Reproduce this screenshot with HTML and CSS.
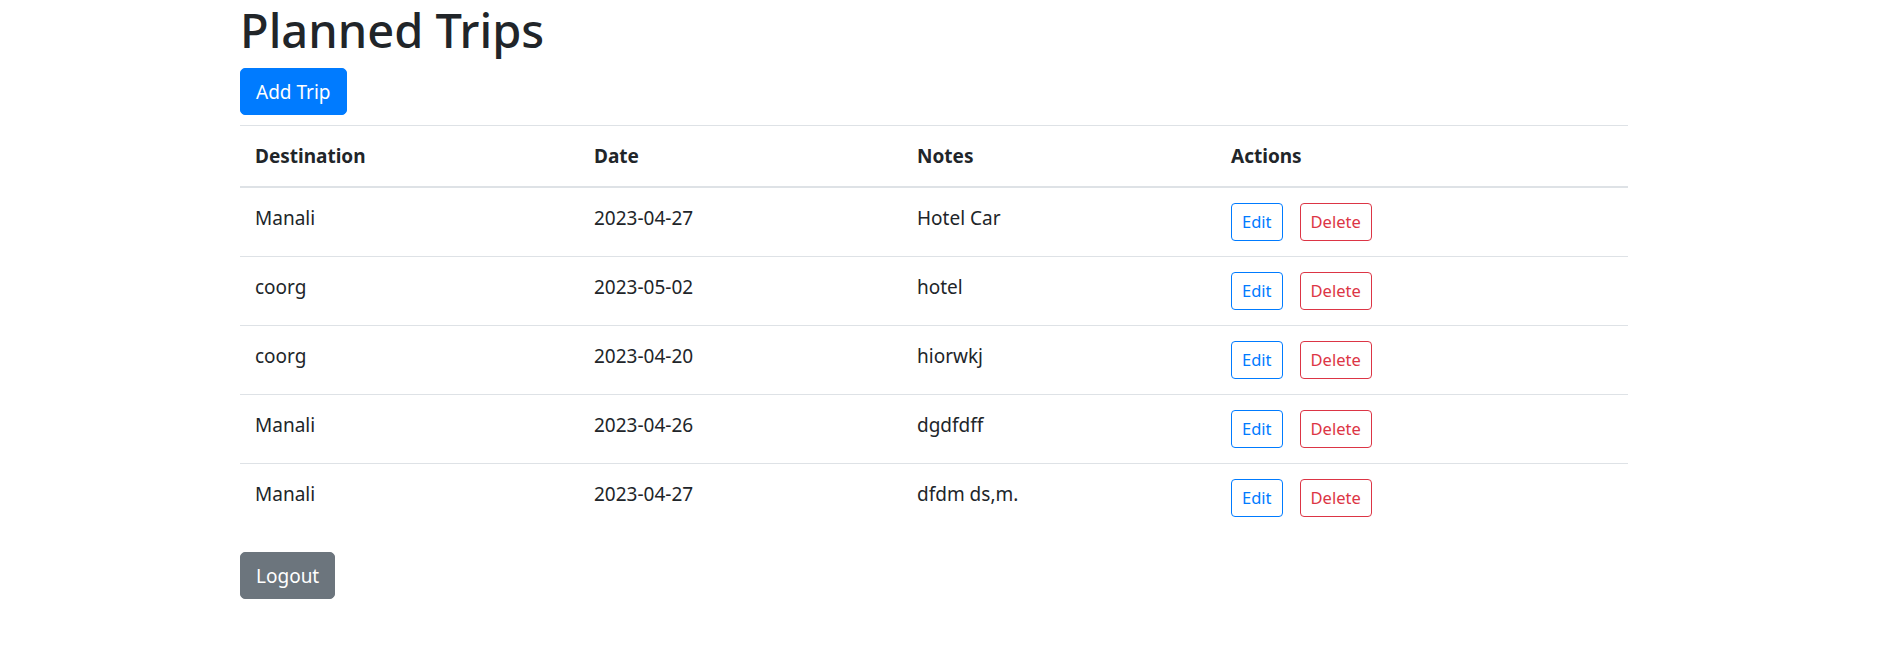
FILE: index.html
```html
<!DOCTYPE html>
<html lang="en">
<head>
<meta charset="utf-8">
<title>Planned Trips</title>
<link rel="stylesheet" href="styles.css">
</head>
<body>
<div class="container">
  <h1 class="title">Planned Trips</h1>
  <div class="toolbar">
    <button class="btn btn-primary">Add Trip</button>
  </div>
  <table class="table">
    <thead>
      <tr>
        <th class="col-dest">Destination</th>
        <th class="col-date">Date</th>
        <th class="col-notes">Notes</th>
        <th>Actions</th>
      </tr>
    </thead>
    <tbody>
      <tr>
        <td>Manali</td><td>2023-04-27</td><td>Hotel Car</td>
        <td><div class="actions"><button class="btn btn-sm btn-outline-primary">Edit</button><button class="btn btn-sm btn-outline-danger">Delete</button></div></td>
      </tr>
      <tr>
        <td>coorg</td><td>2023-05-02</td><td>hotel</td>
        <td><div class="actions"><button class="btn btn-sm btn-outline-primary">Edit</button><button class="btn btn-sm btn-outline-danger">Delete</button></div></td>
      </tr>
      <tr>
        <td>coorg</td><td>2023-04-20</td><td>hiorwkj</td>
        <td><div class="actions"><button class="btn btn-sm btn-outline-primary">Edit</button><button class="btn btn-sm btn-outline-danger">Delete</button></div></td>
      </tr>
      <tr>
        <td>Manali</td><td>2023-04-26</td><td>dgdfdff</td>
        <td><div class="actions"><button class="btn btn-sm btn-outline-primary">Edit</button><button class="btn btn-sm btn-outline-danger">Delete</button></div></td>
      </tr>
      <tr>
        <td>Manali</td><td>2023-04-27</td><td>dfdm ds,m.</td>
        <td><div class="actions"><button class="btn btn-sm btn-outline-primary">Edit</button><button class="btn btn-sm btn-outline-danger">Delete</button></div></td>
      </tr>
    </tbody>
  </table>
  <button class="btn btn-secondary">Logout</button>
</div>
</body>
</html>
```
FILE: styles.css
```css
* { box-sizing: border-box; }
html, body { margin: 0; padding: 0; background: #fff; }
body {
  font-family: "Noto Sans", "Open Sans", sans-serif;
  font-size: 19px;
  line-height: 30px;
  color: #212529;
}
.container {
  width: 1388px;
  margin-left: 240px;
}
.title {
  font-size: 47px;
  font-weight: 500;
  line-height: 60px;
  margin: 0 0 8px;
}
.toolbar { margin-bottom: 10px; }
.btn {
  display: inline-block;
  font-family: inherit;
  font-size: 19px;
  line-height: 30px;
  padding: 7.5px 15px;
  border: 1px solid transparent;
  border-radius: 5px;
  cursor: pointer;
  background: transparent;
}
.btn-primary { background: #007bff; border-color: #007bff; color: #fff; }
.btn-secondary { background: #6c757d; border-color: #6c757d; color: #fff; }
.btn-sm {
  font-size: 16.5px;
  line-height: 26px;
  padding: 5px 10px;
  border-radius: 4px;
}
.btn-outline-primary { color: #007bff; border-color: #007bff; background: #fff; }
.btn-outline-danger { color: #dc3545; border-color: #dc3545; background: #fff; }
.table {
  width: 100%;
  border-collapse: collapse;
  margin-bottom: 20px;
}
.table th, .table td {
  padding: 15px;
  text-align: left;
  vertical-align: top;
  border-top: 1px solid #dee2e6;
}
.table th { font-weight: 700; }
.table thead th { border-bottom: 2px solid #dee2e6; }
.table tbody tr:first-child td { border-top: 0; }
.col-dest { width: 339px; }
.col-date { width: 323px; }
.col-notes { width: 314px; }
.actions { display: flex; gap: 17px; }
```
